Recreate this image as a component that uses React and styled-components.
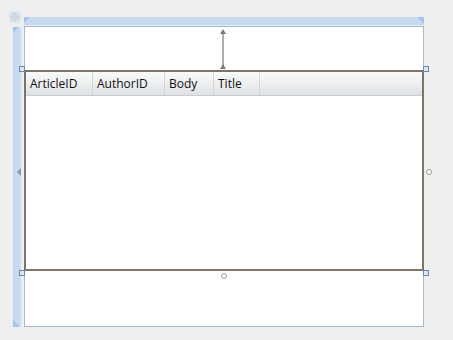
import React from "react";
import styled, { createGlobalStyle } from "styled-components";

const Global = createGlobalStyle`
  html, body {
    margin: 0;
    padding: 0;
    background: #efefef;
  }
  body {
    font-family: "Segoe UI", "Open Sans", "Noto Sans", sans-serif;
  }
`;

const Page = styled.div`
  width: 453px;
  height: 340px;
  padding: 17px 0 0 13px;
  box-sizing: border-box;
  background: #efefef;
`;

const Designer = styled.div`
  display: grid;
  grid-template-columns: 10px 1px 400px;
  grid-template-rows: 9px 301px;
  position: relative;
`;

const MoveIcon = styled.svg`
  position: absolute;
  left: -4px;
  top: -6px;
`;

const TopRuler = styled.div`
  grid-column: 3;
  grid-row: 1;
  position: relative;
  background: #c8daef;
  border-bottom: 1px solid #e3ecf6;
  box-sizing: border-box;
  &::before {
    content: "";
    position: absolute;
    left: 0;
    top: 0;
    border-top: 6px solid #a3c3e9;
    border-right: 6px solid transparent;
  }
  &::after {
    content: "";
    position: absolute;
    right: 0;
    top: 0;
    border-top: 7px solid #a3c3e9;
    border-left: 7px solid transparent;
  }
`;

const LeftRuler = styled.div`
  grid-column: 1;
  grid-row: 2;
  margin-top: 1px;
  position: relative;
  background: linear-gradient(to right, #b4cde9 0, #c8daef 1px, #c8daef 7px, #dce7f4 8px, #eef3f9 10px);
  &::before {
    content: "";
    position: absolute;
    left: 0;
    top: 0;
    border-top: 6px solid #a3c3e9;
    border-right: 6px solid transparent;
  }
  &::after {
    content: "";
    position: absolute;
    left: 0;
    bottom: 0;
    border-bottom: 7px solid #a3c3e9;
    border-right: 7px solid transparent;
  }
`;

const Window = styled.div`
  grid-column: 3;
  grid-row: 2;
  background: #ffffff;
  border: 1px solid #a7bad0;
  box-sizing: border-box;
  padding-top: 43px;
`;

const GridWrap = styled.div`
  position: relative;
  margin: 0 -1px;
  height: 201px;
  border: 2px solid #7d7667;
  box-sizing: border-box;
  background: #ffffff;
`;

const Header = styled.div`
  display: flex;
  height: 24px;
  background: linear-gradient(to bottom, #f9fafa 0%, #eef0f1 45%, #dfe1e5 100%);
  border-bottom: 1px solid #c9ccd1;
  box-sizing: border-box;
`;

const HeaderCell = styled.div`
  width: ${(p) => p.w}px;
  flex: none;
  display: flex;
  align-items: center;
  padding-left: 4px;
  box-sizing: border-box;
  border-right: 1px solid #d3d6da;
  font-size: 12px;
  color: #101010;
`;

const Handle = styled.div`
  position: absolute;
  width: 6px;
  height: 6px;
  box-sizing: border-box;
  border: 1px solid #6a86a8;
  background: #dbe6f3;
  left: ${(p) => p.x}px;
  top: ${(p) => p.y}px;
`;

const Ring = styled.div`
  position: absolute;
  width: 6px;
  height: 6px;
  box-sizing: border-box;
  border: 1px solid #9a9a9a;
  border-radius: 50%;
  background: #ffffff;
  left: ${(p) => p.x}px;
  top: ${(p) => p.y}px;
`;

const Anchor = styled.svg`
  position: absolute;
  left: ${(p) => p.x}px;
  top: ${(p) => p.y}px;
  overflow: visible;
`;

const columns = [
  { name: "ArticleID", w: 67 },
  { name: "AuthorID", w: 72 },
  { name: "Body", w: 49 },
  { name: "Title", w: 46 },
];

export default function App() {
  return (
    <Page>
      <Global />
      <Designer>
        <MoveIcon width="12" height="12" viewBox="0 0 12 12">
          <rect x="0" y="0" width="12" height="12" rx="2" fill="#dde5ee" />
          <circle cx="6" cy="6" r="3.5" fill="none" stroke="#c4d0de" strokeWidth="1" />
          <path d="M6 1.5v9M1.5 6h9" stroke="#c4d0de" strokeWidth="1" />
        </MoveIcon>
        <TopRuler />
        <LeftRuler />
        <Window>
          <GridWrap>
            <Header>
              {columns.map((c) => (
                <HeaderCell key={c.name} w={c.w}>
                  {c.name}
                </HeaderCell>
              ))}
            </Header>
            <Handle x={-7} y={-6} />
            <Handle x={397} y={-6} />
            <Handle x={-7} y={198} />
            <Handle x={397} y={198} />
            <Ring x={195} y={201} />
            <Ring x={400} y={97} />
            <Anchor x={193} y={-43} width="8" height="41">
              <line x1="4" y1="3" x2="4" y2="37" stroke="#7a7a7a" strokeWidth="1.2" />
              <path d="M1 5 L4 0 L7 5 Z" fill="#7a7a7a" />
              <path d="M1 40 L4 35 L7 40 Z" fill="#7a7a7a" />
            </Anchor>
            <Anchor x={-9} y={96} width="4" height="8">
              <path d="M0 4 L4 0 L4 8 Z" fill="#8a9bb0" />
            </Anchor>
          </GridWrap>
        </Window>
      </Designer>
    </Page>
  );
}
